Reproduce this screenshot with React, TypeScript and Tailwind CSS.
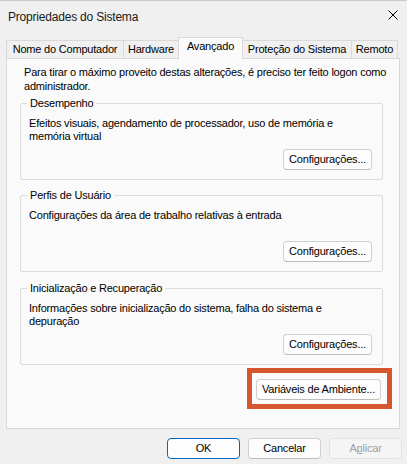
import React from 'react';

const font = { fontFamily: '"Liberation Sans", Arial, sans-serif' };

const Button: React.FC<{ label: React.ReactNode; w: string; primary?: boolean; disabled?: boolean }> = ({ label, w, primary, disabled }) => (
  <button
    className={`${w} h-[21px] rounded-[4px] border text-[11px] leading-none flex items-center justify-center whitespace-nowrap ${
      primary
        ? 'border-[#0067c0] bg-[#fdfdfd] text-black'
        : disabled
        ? 'border-[#e2e2e2] bg-[#f5f5f5] text-[#a0a0a0]'
        : 'border-[#d0d0d0] border-b-[#bcbcbc] bg-[#fdfdfd] text-black'
    }`}
  >
    {label}
  </button>
);

const Group: React.FC<{ title: string; lines: string[]; mt: string }> = ({ title, lines, mt }) => (
  <fieldset className={`${mt} mr-[9px] border border-[#dcdcdc] rounded-[2px] pl-[8px] pr-[10px] pb-[9px]`}>
    <legend className="-ml-[2px] px-[3px] leading-[14px]">{title}</legend>
    <div className="pt-[7px] leading-[13px] min-h-[33px]">
      {lines.map((l, i) => (
        <div key={i}>{l}</div>
      ))}
    </div>
    <div className="flex justify-end mt-[6px]">
      <Button label="Configurações..." w="w-[89px]" />
    </div>
  </fieldset>
);

const App: React.FC = () => {
  const tabs = [
    { label: 'Nome do Computador', w: 'w-[118px]' },
    { label: 'Hardware', w: 'w-[56px]' },
    { label: 'Avançado', w: 'w-[65px]', active: true },
    { label: 'Proteção do Sistema', w: 'w-[110px]' },
    { label: 'Remoto', w: 'w-[47px]' }
  ];

  return (
    <div
      style={font}
      className="w-[407px] h-[464px] bg-[#f0f0f0] text-[11px] tracking-[-0.2px] text-black overflow-hidden whitespace-nowrap border-t border-[#c9c9c9]"
    >
      {/* Title bar */}
      <div className="h-[31px] flex items-center justify-between pl-[8px] pr-[8px]">
        <span className="text-[12px] text-[#1a1a1a]">Propriedades do Sistema</span>
        <svg width="10" height="10" viewBox="0 0 10 10" className="mr-[1px] -mt-[3px]">
          <path d="M0.5 0.5 L9.5 9.5 M9.5 0.5 L0.5 9.5" stroke="#000" strokeWidth="1" />
        </svg>
      </div>

      {/* Tabs */}
      <div className="mt-[5px] pl-[6px] flex items-end h-[21px]">
        {tabs.map((t, i) => (
          <div
            key={i}
            className={`${t.w} ${i > 0 ? '-ml-px' : ''} flex items-center justify-center border border-b-0 border-[#d9d9d9] ${
              t.active ? 'h-[22px] -mb-px relative z-10 bg-[#fafafa] pb-[4px]' : 'h-[18px] bg-[#f0f0f0]'
            }`}
          >
            {t.label}
          </div>
        ))}
      </div>

      {/* Panel */}
      <div className="ml-[6px] w-[394px] h-[371px] border border-[#d9d9d9] bg-[#fafafa] pl-[13px] pr-[7px] pt-[6px] flex flex-col">
        <div className="pl-[4px] leading-[14px]">
          Para tirar o máximo proveito destas alterações, é preciso ter feito logon como
          <br />
          administrador.
        </div>

        <Group
          title="Desempenho"
          mt="mt-[3px]"
          lines={['Efeitos visuais, agendamento de processador, uso de memória e', 'memória virtual']}
        />
        <Group title="Perfis de Usuário" mt="mt-[8px]" lines={['Configurações da área de trabalho relativas à entrada']} />
        <Group
          title="Inicialização e Recuperação"
          mt="mt-[9px]"
          lines={['Informações sobre inicialização do sistema, falha do sistema e', 'depuração']}
        />

        <div className="self-end mt-[3px] border-[5px] border-[#d6562f] pt-[6px] pb-[4px] pl-[4px] pr-[6px]">
          <Button label="Variáveis de Ambiente..." w="w-[125px]" />
        </div>
      </div>

      {/* Bottom buttons */}
      <div className="mt-[9px] flex justify-end gap-[8px] pr-[5px]">
        <Button label="OK" w="w-[73px]" primary />
        <Button label="Cancelar" w="w-[73px]" />
        <Button
          label={
            <>
              A<span className="underline">p</span>licar
            </>
          }
          w="w-[73px]"
          disabled
        />
      </div>
    </div>
  );
};

export default App;
